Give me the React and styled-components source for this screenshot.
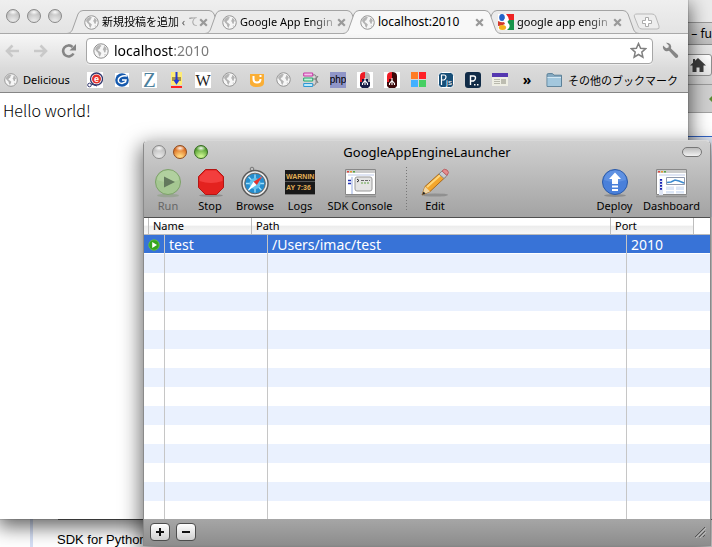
import React from "react";
import styled, { createGlobalStyle, css } from "styled-components";

const UI_FONT = '"Noto Sans", "Noto Sans CJK JP", sans-serif';

const GlobalStyle = createGlobalStyle`
  * { box-sizing: border-box; }
  html, body { margin: 0; padding: 0; }
  body { font-family: ${UI_FONT}; color: #000; overflow: hidden; }
  button, input { font: inherit; color: inherit; margin: 0; padding: 0; border: 0; background: none; }
  svg { display: block; flex: none; }
`;

const Desktop = styled.div`
  position: relative;
  height: 100vh;
  overflow: hidden;
  background: #fff;
`;

/* ---------- Rear browser window ---------- */

const RearWindow = styled.section`
  position: absolute;
  inset: 0;
  display: flex;
  flex-direction: column;
  background: #fff;
`;

const RearMenu = styled.div`
  height: 22px;
  background: #ebebeb;
`;

const RearTitle = styled.div`
  display: flex;
  justify-content: flex-end;
  height: 23px;
  border-top: 1px solid #989898;
  border-bottom: 1px solid #8a8a8a;
  background: linear-gradient(#d6d6d6, #bdbdbd);
  font-size: 12px;
  line-height: 21px;
  white-space: nowrap;
`;

const RearTools = styled.div`
  display: flex;
  align-items: center;
  justify-content: flex-end;
  height: 40px;
  border-bottom: 1px solid #9a9a9a;
  background: linear-gradient(#e6e6e6, #cfcfcf);
`;

const HomeButton = styled.button`
  display: flex;
  align-items: center;
  justify-content: center;
  width: 28px;
  height: 22px;
  border: 1px solid #8f8f8f;
  border-radius: 3px;
  background: linear-gradient(#fff, #e4e4e4);
`;

const RearBookmarks = styled.div`
  display: flex;
  align-items: center;
  justify-content: flex-end;
  height: 28px;
  border-bottom: 1px solid #a2a2a2;
  background: #cfcfcf;
`;

const RearPage = styled.div`
  flex: 1;
  display: flex;
  flex-direction: column;
  justify-content: flex-end;
  margin-top: 23px;
  border-top: 1px solid #3366cc;
  background: linear-gradient(#e5ecf9 80px, #fff 80px);
`;

const RearArticle = styled.div`
  margin-left: 30px;
  padding: 14px 0 0 24px;
  border-left: 3px solid #d5dff5;
  background: linear-gradient(#777, #777) 25px 0 / 100% 1px no-repeat;
  font-family: "Liberation Sans", "Noto Sans CJK JP", sans-serif;
  font-size: 13px;
  line-height: 14px;
  white-space: nowrap;
`;

/* ---------- Chrome window ---------- */

const ChromeWindow = styled.section`
  position: absolute;
  inset: 0 24px 28px 0;
  display: flex;
  flex-direction: column;
  background: #fff;
  box-shadow: 0 6px 18px 2px rgba(0, 0, 0, 0.6), 0 0 1px rgba(0, 0, 0, 0.6);
`;

const TabStrip = styled.div`
  display: flex;
  align-items: flex-end;
  height: 34px;
  background: linear-gradient(#efefef, #e3e3e3);
  box-shadow: inset 0 -1px #a9a9a9;
`;

const TrafficLights = styled.div`
  display: flex;
  gap: 7px;
`;

const ChromeLights = styled(TrafficLights)`
  align-self: flex-start;
  width: 67px;
  flex: none;
  padding: 9px 0 0 6px;
`;

const lightColors = {
  grey: ["#bdbdbd", "#e4e4e4", "#8a8a8a"],
  amber: ["#d9691e", "#ffd27a", "#8f4a1d"],
  green: ["#4e9a2c", "#c5f08a", "#35691f"],
};

const Light = styled.button`
  width: 14px;
  height: 14px;
  border-radius: 50%;
  ${({ $tone }) => {
    const [mid, low, edge] = lightColors[$tone];
    return css`
      border: 1px solid ${edge};
      background: radial-gradient(ellipse 5px 3px at 50% 18%, #fffe, #fff0),
        radial-gradient(circle at 50% 95%, ${low} 15%, ${mid} 75%);
    `;
  }}
`;

const Tabs = styled.div`
  display: flex;
  align-items: flex-end;
`;

const TabBox = styled.div`
  position: relative;
  z-index: ${({ $active }) => ($active ? 2 : 1)};
  display: flex;
  align-items: center;
  width: 158px;
  height: 24px;
  margin-right: -20px;
  padding: 0 17px 0 17px;
  isolation: isolate;
`;

const TabShape = styled.svg`
  position: absolute;
  inset: 0;
  z-index: -1;
`;

const TabTitle = styled.button`
  flex: 1;
  min-width: 0;
  margin: 0 2px 0 3px;
  font-size: ${({ $fade }) => ($fade ? 11 : 12)}px;
  line-height: 22px;
  text-align: left;
  white-space: nowrap;
  ${({ $fade }) =>
    $fade &&
    css`
      mask-image: linear-gradient(90deg, #000 75%, #0003);
    `}
`;

const IconButton = styled.button`
  display: flex;
  flex: none;
`;

const NewTab = styled(IconButton)`
  align-self: flex-start;
  margin: 13px 0 0 14px;
`;

const NavBar = styled.div`
  display: flex;
  align-items: center;
  height: 33px;
  padding: 2px 9px 2px 5px;
  gap: 9px;
  background: linear-gradient(#f7f7f7, #dcdcdc);
`;

const NavButtons = styled.div`
  display: flex;
  gap: 13px;
  width: 72px;
  flex: none;
`;

const Omnibox = styled.label`
  display: flex;
  flex: 1;
  align-items: center;
  gap: 5px;
  height: 26px;
  padding: 0 5px 0 6px;
  border: 1px solid #a6a6a6;
  border-radius: 4px;
  background: #fff;
  box-shadow: 0 1px #eee;
`;

const Address = styled.input`
  flex: 1;
  min-width: 0;
  outline: none;
  font-size: 14px;
  line-height: 20px;
  color: transparent;
  background: linear-gradient(90deg, #000 59px, #777 59px);
  background-clip: text;
`;

const BookmarkBar = styled.nav`
  display: flex;
  align-items: center;
  height: 26px;
  padding: 0 10px 0 4px;
  border-bottom: 1px solid #858585;
  background: linear-gradient(#dbdbdb, #d0d0d0);
  font-size: 11px;
  white-space: nowrap;
`;

const Bookmark = styled.a`
  display: flex;
  align-items: center;
  gap: 5px;
  min-width: 16px;
  color: #000;
  text-decoration: none;
`;

const Favicons = styled.div`
  display: flex;
  flex: none;
  gap: 11px;
`;

const NamedBookmark = styled(Bookmark)`
  width: 83px;
  flex: none;
`;

const Overflow = styled.button`
  margin: 0 auto;
  font-size: 14px;
  line-height: 16px;
  font-weight: 700;
`;

const Page = styled.main`
  flex: 1;
  padding: 5px 3px;
  font-family: "Noto Sans CJK JP", sans-serif;
  font-size: 16px;
  font-weight: 300;
  line-height: 24px;
`;

/* ---------- Launcher window ---------- */

const LauncherWindow = styled.section`
  position: absolute;
  inset: 140px 1px 1px 143px;
  display: flex;
  flex-direction: column;
  overflow: hidden;
  border: 1px solid #8a8a8a;
  border-top-color: #d8d8d8;
  border-radius: 5px 5px 0 0;
  background: #fff;
`;

const LauncherShadow = styled.div`
  position: absolute;
  inset: 140px 1px 1px 143px;
  border-radius: 5px 5px 0 0;
  box-shadow: 0 8px 20px 3px rgba(0, 0, 0, 0.55);
`;

const LauncherHead = styled.header`
  flex: none;
  height: 77px;
  border-bottom: 1px solid #4f4f4f;
  background: linear-gradient(#d0d0d0, #a3a3a3);
`;

const TitleBar = styled.div`
  display: grid;
  grid-template-columns: 70px 1fr 70px;
  align-items: center;
  height: 22px;
  padding: 0 8px;
`;

const WindowTitle = styled.h1`
  margin: 0;
  font-size: 13px;
  font-weight: 400;
  line-height: 20px;
  text-align: center;
`;

const Pill = styled.button`
  justify-self: end;
  width: 20px;
  height: 10px;
  border: 1px solid #777;
  border-radius: 5px;
  background: linear-gradient(#bbb, #f2f2f2);
`;

const Toolbar = styled.div`
  display: flex;
  gap: 10px;
  padding: 4px 10px 0 8px;
`;

const Tool = styled.button`
  display: flex;
  flex: none;
  flex-direction: column;
  align-items: center;
  width: ${({ $width = 32 }) => $width}px;
  font-size: 11px;
  line-height: 16px;
  white-space: nowrap;
  &:disabled { color: #666; }
`;

const Divider = styled.span`
  width: 5px;
  height: 44px;
  background: repeating-linear-gradient(#777 0 1px, transparent 1px 3px) 2px 0 / 1px 100% no-repeat;
`;

const Spacer = styled.span`
  flex: 1;
`;

const TableArea = styled.div`
  flex: 1;
  min-height: 0;
  overflow: hidden;
`;

const AppTable = styled.table`
  display: block;
  thead, tbody { display: block; }
`;

const HeadRow = styled.tr`
  display: grid;
  grid-template-columns: 4px 103px 1fr 83px 17px;
  height: 17px;
  border-bottom: 1px solid #bbb;
  background: linear-gradient(#fff 45%, #ececec 50%, #f8f8f8);
`;

const HeadCell = styled.th`
  padding: 0 4px;
  border-left: 1px solid #bdbdbd;
  font-size: 11px;
  font-weight: 400;
  line-height: 16px;
  text-align: left;
`;

const HeadEdge = styled.td`
  padding: 0;
  background: ${({ $filled }) => ($filled ? "transparent" : "#fff")};
  border-left: ${({ $filled }) => ($filled ? "0" : "1px solid #bdbdbd")};
`;

const Row = styled.tr`
  display: grid;
  grid-template-columns: 20px 103px 1fr 84px;
  height: 19px;
  background: #fff;
  &:nth-child(even) { background: #eaf1fe; }
  ${({ $selected }) =>
    $selected &&
    css`
      color: #fff;
      background: #3873d7;
      border-bottom: 1px solid #fff;
    `}
`;

const Cell = styled.td`
  padding: 0 4px;
  font-size: 14px;
  line-height: 20px;
  height: 100%;
  & + & { border-left: 1px solid #c6c6c6; }
`;

const StatusCell = styled(Cell)`
  display: flex;
  align-items: center;
  padding: 0 0 0 4px;
`;

const Footer = styled.footer`
  display: flex;
  flex: none;
  align-items: center;
  gap: 6px;
  height: 26px;
  padding: 0 4px 1px 6px;
  background: linear-gradient(#a6a6a6, #8d8d8d);
`;

const FooterButton = styled.button`
  display: flex;
  align-items: center;
  justify-content: center;
  width: 20px;
  height: 18px;
  border: 1px solid #4d4d4d;
  border-radius: 4px;
  background: linear-gradient(#fff, #cfcfcf);
`;

/* ---------- Drawings ---------- */

const Globe = ({ size = 14 }) => (
  <svg width={size} height={size} viewBox="0 0 16 16">
    <circle cx="8" cy="8" r="7.2" fill="#f6f6f6" stroke="#8f8f8f" strokeWidth="1" />
    <path d="M2.500 4.500 5 2.300 7.500 2 8.500 3 7 4.200 7.200 5.300 5.600 6.200 5 7.500 6.600 8.600 8.400 10 7.600 12 6.800 13.800 5.600 12 5.200 10 3.200 8 2.200 6.500Z" fill="#b4b4b4" />
    <path d="M11 2.800 13 4.400 14 7 12.900 6.600 12.500 9.200 11.300 9.400 10.600 7.400 9.700 6.300 10.700 4.800Z" fill="#b4b4b4" />
    <path d="M11.200 11.600 12.800 10.900 12 12.900Z" fill="#b4b4b4" />
  </svg>
);

const Cross = () => (
  <svg width="9" height="9" viewBox="0 0 9 9">
    <path d="M1.200 1.200 7.800 7.800M7.800 1.200 1.200 7.800" stroke="#999" strokeWidth="2.200" />
  </svg>
);

const GoogleIcon = () => (
  <svg width="16" height="16" viewBox="0 0 16 16">
    <rect width="16" height="16" fill="#fff" />
    <path d="M8 0h8v6H11Q10 2 8 0Z" fill="#e22" />
    <path d="M11 6h5v10H9q4-3 2-6L9 8Z" fill="#17944a" />
    <path d="M0 7q4 2 6 1l1 2q-3 2-7 2Z" fill="#d33b2c" />
    <ellipse cx="4" cy="3.500" rx="2.800" ry="3.500" fill="#2563c9" />
    <ellipse cx="4.500" cy="13.500" rx="3.600" ry="2.500" fill="#f5b31c" />
    <path d="M6 6q3 1 3 4" stroke="#fff" strokeWidth="2" fill="none" />
  </svg>
);

const TabOutline = ({ active }) => (
  <TabShape width="158" height="24" viewBox="0 0 158 24">
    <path
      d="M0 24C4 23 5 21 6 18L11 4Q12.500 .5 16 .5H142Q145.500 .5 147 4L152 18C153 21 154 23 158 24Z"
      fill={active ? "#f8f8f8" : "#ebebeb"}
    />
    <path
      d="M0 23.500C4 23 5 21 6 18L11 4Q12.500 .5 16 .5H142Q145.500 .5 147 4L152 18C153 21 154 23 158 23.500"
      fill="none"
      stroke="#a3a3a3"
    />
    {!active && <path d="M0 23.500H158" stroke="#a9a9a9" />}
  </TabShape>
);

const NewTabIcon = () => (
  <svg width="28" height="17" viewBox="0 0 28 17">
    <path d="M4 1H19Q21.500 1 22.500 3L26 13Q27 16 24 16H9Q6.500 16 5.500 14L1.500 4Q.5 1 4 1Z" fill="#ededed" stroke="#b9b9b9" />
    <path d="M12.500 4.500h3v3h3v3h-3v3h-3v-3h-3v-3h3Z" fill="#fff" stroke="#ababab" />
  </svg>
);

const Arrow = ({ flip }) => (
  <svg width="15" height="14" viewBox="0 0 15 14">
    <path d={flip ? "M1 7H13M7.500 1.500 13 7 7.500 12.500" : "M14 7H2M7.500 1.500 2 7 7.500 12.500"} fill="none" stroke="#c9c9c9" strokeWidth="2.600" />
  </svg>
);

const Reload = () => (
  <svg width="16" height="14" viewBox="0 0 16 14">
    <path d="M12.500 9.500A5.500 5.500 0 1 1 11.500 3" fill="none" stroke="#858585" strokeWidth="2.600" />
    <path d="M15 0V6.500H8.500Z" fill="#858585" />
  </svg>
);

const Star = () => (
  <svg width="17" height="17" viewBox="0 0 17 17">
    <path d="M8.500 1.500 10.600 6.200 15.600 6.700 11.800 10.100 12.900 15.200 8.500 12.500 4.100 15.200 5.200 10.100 1.400 6.700 6.400 6.200Z" fill="#fff" stroke="#808080" strokeWidth="1.500" />
  </svg>
);

const Wrench = () => (
  <svg width="17" height="17" viewBox="0 0 17 17">
    <path d="M4 .8 6.800 3.500 6.500 5.600 4.200 6.200 1 3.600Q.3 7.500 3.300 8.900 5.300 9.600 7 8.800L13.200 15.400Q14.500 16.500 15.800 15.300 16.900 14 15.700 12.700L9 6.600Q9.700 4.500 8.500 2.600 6.800 .3 4 .8Z" fill="#858585" />
  </svg>
);

const HomeIcon = () => (
  <svg width="16" height="14" viewBox="0 0 16 14">
    <path d="M8 0 16 7.500H13.500V14H9.500V9.500H6.500V14H2.500V7.500H0L3 4.700V1H5V2.800Z" fill="#3d3d3d" />
  </svg>
);

const GreenArrow = () => (
  <svg width="3" height="6" viewBox="0 0 3 6">
    <path d="M3 0V6L0 3Z" fill="#5c8a33" />
  </svg>
);

const Folder = () => (
  <svg width="17" height="14" viewBox="0 0 17 14">
    <path d="M1 2Q1 .6 2.200 .6H6.500L8 2.200H15.500V13.400H1Z" fill="#86aac2" stroke="#5b8098" />
    <path d="M1.500 4H15V13H1.500Z" fill="#a3c7dd" />
    <path d="M1.500 4.500H15" stroke="#d3e7f2" />
  </svg>
);

const Fav = ({ children }) => (
  <svg width="16" height="16" viewBox="0 0 16 16">{children}</svg>
);

const letter = (x, y, size, text, fill, family = "Liberation Sans", weight = 400) => (
  <text x={x} y={y} fontSize={size} fontFamily={family} fontWeight={weight} fill={fill} textAnchor="middle">{text}</text>
);

const Rocket = ({ left, right, base }) => (
  <Fav>
    <path d="M0 0h16v16H0Z" fill="#fff" />
    <path d="M3 4Q3 0 8 0V10H3Z" fill={left} />
    <path d="M8 0Q13 0 13 4V10H8Z" fill={right} />
    <path d="M3 10H5V7H11V10H13V14L11 16H5L3 14Z" fill={base} />
    <path d="M8 6V13M8 8.500 5.500 11.500V13M8 8.500l2.500 3V13" stroke="#fff" strokeWidth="1.100" fill="none" />
  </Fav>
);

const favicons = [
  ["Excite", <Fav><path d="M0 0h16v16H0Z" fill="#fff" /><circle cx="9.500" cy="7" r="6" fill="#fff" stroke="#34386e" strokeWidth="1.300" /><circle cx="9.500" cy="7" r="4.500" fill="#e5302a" /><circle cx="2.500" cy="13" r="1.800" fill="#fff" stroke="#34386e" /><path d="M4 12 10 14" stroke="#34386e" />{letter(9.5, 10, 9, "e", "#fff", "Liberation Sans", 700)}</Fav>],
  ["Goo", <Fav><path d="M1 1h14v14H1Z" fill="#fff" /><circle cx="8" cy="8" r="6.800" fill="#1559ad" /><path d="M13 4Q7 3 4.500 7 3.500 11 8 11.500L11.500 10 12 8H8" stroke="#fff" strokeWidth="1.500" fill="none" /></Fav>],
  ["Z", <Fav><path d="M1 0h15v16H1Z" fill="#fff" />{letter(8.5, 15, 21, "Z", "#4c809c", "Liberation Serif")}</Fav>],
  ["Download", <Fav><path d="M3 0h11v13H3Z" fill="#ffec75" /><path d="M3 14h11v2H3Z" fill="#f22" /><path d="M4 5h9v4H4Z" fill="#a6934d" /><path d="M8.500 0V11M6.500 8l2 3 2-3" stroke="#2339d5" strokeWidth="2" fill="none" /></Fav>],
  ["Wikipedia", <Fav><path d="M0 0h16v16H0Z" fill="#fff" />{letter(8, 14, 16, "W", "#222", "Liberation Serif")}</Fav>],
  ["Page", <Globe size={15} />],
  ["Feed", <Fav><path d="M1 2h14v9q0 4-7 4T1 11Z" fill="#faae35" /><path d="M4.500 4v3q0 3.500 3.500 3.500T11.500 7" stroke="#fff" strokeWidth="2" fill="none" /><path d="M10.500 3h2v2h-2Z" fill="#fff" /></Fav>],
  ["Site", <Globe size={15} />],
  ["List", <Fav><path d="M.7 1h9v3h-9Z" fill="#f6c1ec" stroke="#c537a3" /><path d="M.7 6h9v3h-9Z" fill="#c1f3db" stroke="#26a66d" /><path d="M.7 11.500h9v3h-9Z" fill="#bdeafa" stroke="#2e98d3" /><path d="M10 3q4-1 3 4H10M10 13q4 1 3-6M15 4l-2 3 2 4" fill="none" stroke="#777" /></Fav>],
  ["PHP", <Fav><path d="M0 0h16v16H0Z" fill="#9096c8" />{letter(8, 11, 10, "php", "#000")}</Fav>],
  ["Mail", <Rocket left="#ee1c25" right="#b5b5b5" base="#151c44" />],
  ["Rocket", <Rocket left="#ee1c25" right="#3b0709" base="#3b0709" />],
  ["Microsoft", <Fav><path d="M0 0h7v7H0Z" fill="#ff7c24" /><path d="M8 0h7v7H8Z" fill="#ff2027" /><path d="M0 8h7v7H0Z" fill="#42b0ff" /><path d="M8 8h7v7H8Z" fill="#46cf63" /></Fav>],
  ["Processing.js", <Fav><rect x=".5" y=".5" width="15" height="15" rx="3" fill="#174f78" stroke="#fff" /><path d="M3.500 13V3H6Q8 3 8 5T6 8H4" stroke="#fff" strokeWidth="1.200" fill="none" />{letter(11, 13, 8, "js", "#fff")}</Fav>],
  ["Processing", <Fav><rect width="16" height="16" rx="3" fill="#102b47" /><path d="M5.500 13V4H8.500Q10.500 4 10.500 6T8.500 9H6" stroke="#fff" strokeWidth="1.400" fill="none" /><path d="M9 12h1.500v1.500H9ZM12 12h1.500v1.500H12Z" fill="#fff" /></Fav>],
  ["News", <Fav><path d="M0 1h16v13H0Z" fill="#eeeee4" /><path d="M0 1h16v4H0Z" fill="#5538b0" /><path d="M2 7.500H8M2 9.500H8M2 11.500H8" stroke="#b9b9ad" /><path d="M9 7h5v5H9Z" fill="#bdbdb1" /></Fav>],
];

const RunIcon = () => (
  <svg width="30" height="30" viewBox="0 0 30 30">
    <ellipse cx="15" cy="27.500" rx="11" ry="1.800" fill="#8c9d83" opacity=".6" />
    <circle cx="15" cy="14" r="12.500" fill="#a5c792" stroke="#7da269" />
    <path d="M4 12Q5 3 15 2.500T26 12Q14 16 4 12Z" fill="#b7d4a5" opacity=".7" />
    <path d="M11 8.500 22 14 11 19.500Z" fill="#63795d" />
  </svg>
);

const StopIcon = () => (
  <svg width="30" height="30" viewBox="0 0 30 30">
    <ellipse cx="16" cy="27.500" rx="12" ry="1.500" fill="#777" opacity=".6" />
    <path d="M10.500 1.500H21.500L28.500 8.500V19.500L21.500 26.500H10.500L3.500 19.500V8.500Z" fill="#e4221f" stroke="#b31614" />
    <path d="M11 2.500H21L27.500 9V13Q16 17 4.500 13V9Z" fill="#f55" opacity=".55" />
  </svg>
);

const CompassIcon = () => (
  <svg width="30" height="32" viewBox="0 0 30 32">
    <circle cx="12" cy="3" r="1.800" fill="none" stroke="#777" />
    <circle cx="15" cy="17.500" r="13" fill="#ececec" stroke="#5c5c5c" strokeWidth="1.500" />
    <circle cx="15" cy="17.500" r="10.300" fill="#258dce" stroke="#666" />
    <path d="M15 8.500V26.500M6 17.500H24M8.600 11 21.400 24M21.400 11 8.600 24" stroke="#a5e0fa" strokeWidth="1.300" />
    <circle cx="15" cy="17.500" r="5.500" fill="#62c1ec" />
    <path d="M22.500 10 16.800 19 13.500 15.800Z" fill="#e73029" />
    <path d="M7.500 25 16.500 19 13.500 15.800Z" fill="#fff" />
  </svg>
);

const LogsIcon = () => (
  <svg width="30" height="30" viewBox="0 0 30 30">
    <path d="M0 2h30v24H0Z" fill="#191919" />
    <path d="M0 13.500H30" stroke="#555" />
    <path d="M0 26.500H30" stroke="#777" />
    <text x="1" y="11" fontFamily="Liberation Sans" fontSize="7" fontWeight="700" fill="#e2ae55">WARNIN</text>
    <text x="1" y="22" fontFamily="Liberation Sans" fontSize="7" fontWeight="700" fill="#e2ae55">AY 7:36</text>
  </svg>
);

const MiniWindow = ({ children }) => (
  <svg width="33" height="30" viewBox="0 0 33 30">
    <path d="M1 28.500H32" stroke="#777" strokeWidth="1.500" opacity=".5" />
    <path d="M1.500 1.500h30v25h-30Z" fill="#fff" stroke="#888" />
    <path d="M2 2h29v3H2Z" fill="#ccc" />
    <path d="M3 3h2v1.500H3Z" fill="#e2453d" />
    <path d="M6 3h2v1.500H6Z" fill="#e59a30" />
    <path d="M9 3h2v1.500H9Z" fill="#56a744" />
    <path d="M4 6h26v2H4Z" fill="#dfe5f4" />
    {children}
  </svg>
);

const ConsoleIcon = () => (
  <MiniWindow>
    <path d="M8 9v17" stroke="#c9d4ef" strokeWidth="2" />
    <path d="M4 12.500h3M4 15.500h3" stroke="#2132b5" strokeWidth="1.500" />
    <rect x="11" y="9" width="17" height="14" rx="2" fill="#e4e4e4" stroke="#999" />
    <path d="M13 11 15 12.500 13 14" stroke="#222" fill="none" />
    <path d="M17 12.500H26" stroke="#666" strokeDasharray="3 1" />
    <path d="M17 15H26" stroke="#62a447" strokeDasharray="2 1" />
  </MiniWindow>
);

const DashboardIcon = () => (
  <MiniWindow>
    <path d="M6 11v16" stroke="#dfe5f4" strokeWidth="4" />
    <path d="M6 11v12" stroke="#1721b4" strokeWidth="2" strokeDasharray="1.800 1.200" />
    <path d="M11.500 9.500h18v7h-18Z" fill="#fff" stroke="#8f99ae" />
    <path d="M12 14.500 16 14 20 12 24 13 29 15" fill="none" stroke="#3c8bd0" strokeWidth="1.500" />
    <path d="M11 18.500h8v7h-8ZM21 18.500h8v7h-8Z" fill="#dce6f6" />
    <path d="M11 22.500h18" stroke="#fff" />
  </MiniWindow>
);

const PencilIcon = () => (
  <svg width="30" height="30" viewBox="0 0 30 30">
    <ellipse cx="15" cy="27" rx="13" ry="1.600" fill="#777" opacity=".55" />
    <path d="M2 27 5 18.500 20.500 4.500 25.500 9 10 23.500Z" fill="#f3a62d" stroke="#a8691f" />
    <path d="M7 19 21.500 6" stroke="#ffd77b" strokeWidth="2" />
    <path d="M2 27 5 18.500 10 23.500Z" fill="#f0d6a4" />
    <path d="M2 27 3.500 23.500 5.500 25.500Z" fill="#222" />
    <path d="M19 6 22 3 27 7.500 24 10.500Z" fill="#c9ccd0" stroke="#85898e" />
    <path d="M22 3Q24 0 27 2T27 7.500Z" fill="#e78b8d" stroke="#b96063" />
  </svg>
);

const DeployIcon = () => (
  <svg width="30" height="30" viewBox="0 0 30 30">
    <ellipse cx="15" cy="27.500" rx="11" ry="1.500" fill="#777" opacity=".6" />
    <circle cx="15" cy="14" r="12.500" fill="#4a80da" stroke="#2b5aa8" />
    <path d="M4 12Q5 3 15 2.500T26 12Q14 16 4 12Z" fill="#7ba6eb" opacity=".45" />
    <path d="M15 4.500 21 11H18V16H12V11H9ZM12 17.500h6v2h-6ZM12 21h6v2h-6Z" fill="#fff" />
  </svg>
);

const StatusIcon = () => (
  <svg width="12" height="12" viewBox="0 0 12 12">
    <circle cx="6" cy="6" r="5.200" fill="#36a51e" stroke="#5fbd42" />
    <path d="M4.200 3 9 6 4.200 9Z" fill="#fff" />
  </svg>
);

const Sign = ({ plus }) => (
  <svg width="8" height="8" viewBox="0 0 8 8">
    <path d={plus ? "M0 4H8M4 0V8" : "M0 4H8"} stroke="#111" strokeWidth="2" />
  </svg>
);

const Grip = () => (
  <svg width="12" height="12" viewBox="0 0 12 12">
    <path d="M1 11 11 1M5 11 11 5M9 11 11 9" stroke="#555" />
    <path d="M2 12 12 2M6 12 12 6" stroke="#c5c5c5" strokeWidth=".8" />
  </svg>
);

/* ---------- Composition ---------- */

const tabs = [
  { title: "新規投稿を追加 ‹ て", fade: true },
  { title: "Google App Engin", fade: true },
  { title: "localhost:2010", active: true },
  { title: "google app engin", fade: true, google: true },
];

const leftTools = [
  { label: "Run", icon: <RunIcon />, disabled: true },
  { label: "Stop", icon: <StopIcon /> },
  { label: "Browse", icon: <CompassIcon />, width: 38 },
  { label: "Logs", icon: <LogsIcon /> },
  { label: "SDK Console", icon: <ConsoleIcon />, width: 68 },
];

const rightTools = [
  { label: "Deploy", icon: <DeployIcon />, width: 37 },
  { label: "Dashboard", icon: <DashboardIcon />, width: 57 },
];

const ToolIconBox = styled.span`
  display: flex;
  align-items: flex-end;
  height: 31px;
`;

const ToolItem = ({ label, icon, width, disabled }) => (
  <Tool $width={width} disabled={disabled}>
    <ToolIconBox>{icon}</ToolIconBox>
    {label}
  </Tool>
);

const emptyRows = Array.from({ length: 40 }, (_, i) => i);

export default function App() {
  return (
    <Desktop>
      <GlobalStyle />
      <RearWindow>
        <RearMenu />
        <RearTitle>– fu</RearTitle>
        <RearTools>
          <HomeButton aria-label="Home"><HomeIcon /></HomeButton>
        </RearTools>
        <RearBookmarks><GreenArrow /></RearBookmarks>
        <RearPage>
          <RearArticle>SDK for Python に関する詳しい情報は、以下をご覧ください。</RearArticle>
        </RearPage>
      </RearWindow>

      <ChromeWindow>
        <TabStrip>
          <ChromeLights>
            <Light $tone="grey" aria-label="Close window" />
            <Light $tone="grey" aria-label="Minimize window" />
            <Light $tone="grey" aria-label="Zoom window" />
          </ChromeLights>
          <Tabs>
            {tabs.map((tab) => (
              <TabBox key={tab.title} $active={tab.active}>
                <TabOutline active={tab.active} />
                {tab.google ? <GoogleIcon /> : <Globe size={15} />}
                <TabTitle $fade={tab.fade}>{tab.title}</TabTitle>
                <IconButton aria-label="Close tab"><Cross /></IconButton>
              </TabBox>
            ))}
          </Tabs>
          <NewTab aria-label="New tab"><NewTabIcon /></NewTab>
        </TabStrip>
        <NavBar>
          <NavButtons>
            <IconButton aria-label="Back"><Arrow /></IconButton>
            <IconButton aria-label="Forward"><Arrow flip /></IconButton>
            <IconButton aria-label="Reload"><Reload /></IconButton>
          </NavButtons>
          <Omnibox>
            <Globe size={16} />
            <Address aria-label="Address" defaultValue="localhost:2010" />
            <IconButton aria-label="Bookmark this page"><Star /></IconButton>
          </Omnibox>
          <IconButton aria-label="Settings"><Wrench /></IconButton>
        </NavBar>
        <BookmarkBar>
          <NamedBookmark href="#delicious"><Globe />Delicious</NamedBookmark>
          <Favicons>
            {favicons.map(([name, icon]) => (
              <Bookmark key={name} href="#bookmark" aria-label={name}>{icon}</Bookmark>
            ))}
          </Favicons>
          <Overflow aria-label="More bookmarks">»</Overflow>
          <Bookmark href="#other"><Folder />その他のブックマーク</Bookmark>
        </BookmarkBar>
        <Page>Hello world!</Page>
      </ChromeWindow>

      <LauncherShadow />
      <LauncherWindow>
        <LauncherHead>
          <TitleBar>
            <TrafficLights>
              <Light $tone="grey" aria-label="Close window" />
              <Light $tone="amber" aria-label="Minimize window" />
              <Light $tone="green" aria-label="Zoom window" />
            </TrafficLights>
            <WindowTitle>GoogleAppEngineLauncher</WindowTitle>
            <Pill aria-label="Toggle toolbar" />
          </TitleBar>
          <Toolbar>
            {leftTools.map((tool) => <ToolItem key={tool.label} {...tool} />)}
            <Divider />
            <ToolItem label="Edit" icon={<PencilIcon />} />
            <Spacer />
            {rightTools.map((tool) => <ToolItem key={tool.label} {...tool} />)}
          </Toolbar>
        </LauncherHead>
        <TableArea>
          <AppTable>
            <thead>
              <HeadRow>
                <HeadEdge $filled />
                <HeadCell scope="col">Name</HeadCell>
                <HeadCell scope="col">Path</HeadCell>
                <HeadCell scope="col">Port</HeadCell>
                <HeadEdge />
              </HeadRow>
            </thead>
            <tbody>
              <Row $selected>
                <StatusCell><StatusIcon /></StatusCell>
                <Cell>test</Cell>
                <Cell>/Users/imac/test</Cell>
                <Cell>2010</Cell>
              </Row>
              {emptyRows.map((i) => (
                <Row key={i}><StatusCell /><Cell /><Cell /><Cell /></Row>
              ))}
            </tbody>
          </AppTable>
        </TableArea>
        <Footer>
          <FooterButton aria-label="Add"><Sign plus /></FooterButton>
          <FooterButton aria-label="Remove"><Sign /></FooterButton>
          <Spacer />
          <Grip />
        </Footer>
      </LauncherWindow>
    </Desktop>
  );
}
